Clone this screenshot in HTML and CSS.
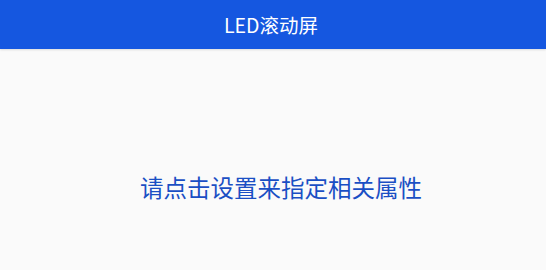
FILE: index.html
```html
<!DOCTYPE html>
<html lang="zh">
<head>
<meta charset="utf-8">
<link rel="stylesheet" href="styles.css">
</head>
<body>
<div class="app">
  <header class="bar">LED滚动屏</header>
  <main class="content">
    <p class="hint">请点击设置来指定相关属性</p>
  </main>
</div>
</body>
</html>
```
FILE: styles.css
```css
html, body {
  margin: 0;
  padding: 0;
  height: 100%;
}
body {
  font-family: "Noto Sans CJK SC", "Noto Sans", sans-serif;
  background: #fafafa;
}
.app {
  display: flex;
  flex-direction: column;
  height: 100%;
}
.bar {
  height: 49px;
  background: #1557e0;
  color: #ffffff;
  font-size: 19.5px;
  display: flex;
  align-items: center;
  justify-content: center;
  padding-right: 4px;
  box-shadow: 0 1px 2px rgba(0,0,0,0.12);
}
.content {
  flex: 1;
  display: flex;
  align-items: center;
  justify-content: center;
  padding-top: 54px;
  padding-left: 16px;
}
.hint {
  margin: 0;
  font-size: 23.5px;
  font-weight: 400;
  color: #1a4fc4;
}
```
